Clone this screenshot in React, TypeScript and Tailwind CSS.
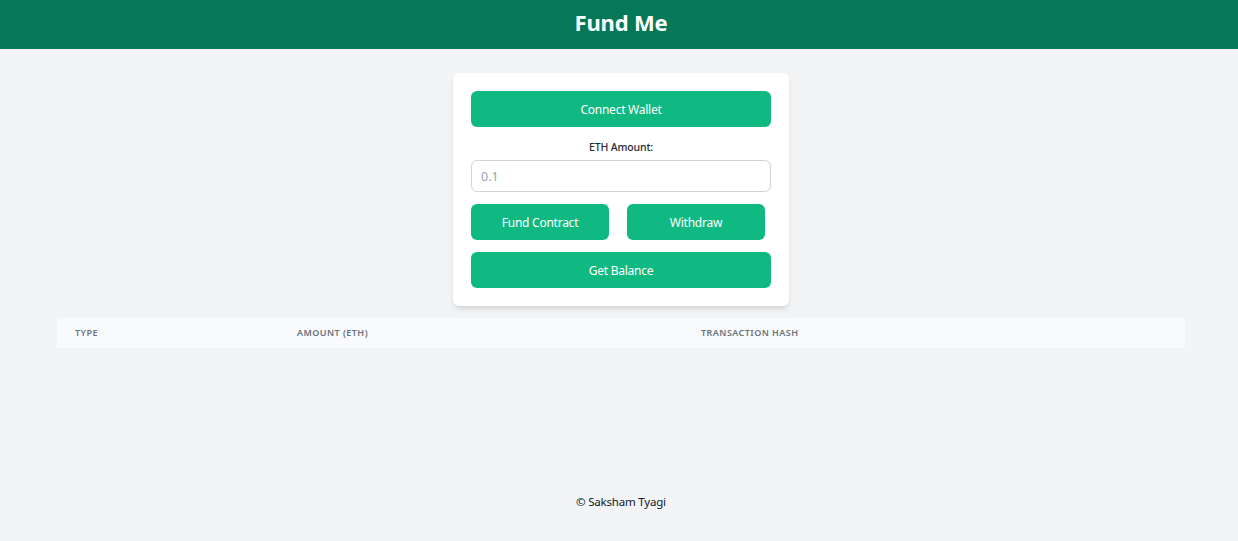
export default function App() {
  const btn = "h-9 pt-[2px] rounded-md bg-[#10b981] text-white text-[12px] tracking-[-0.25px]";
  return (
    <div
      className="min-h-[541px] bg-[#f3f4f6] flex flex-col"
      style={{ fontFamily: '"Noto Sans", "Open Sans", sans-serif' }}
    >
      <header className="h-[49px] bg-[#047857] flex items-center justify-center pb-[5px]">
        <h1 className="text-white text-[22px] font-bold leading-none ml-1 tracking-[-0.2px]">Fund Me</h1>
      </header>
      <main className="flex flex-col items-center pt-6">
        <div className="ml-1 w-[336px] bg-white rounded-md shadow-md p-[18px] flex flex-col">
          <button className={btn + " w-full"}>Connect Wallet</button>
          <label className="mt-3 text-center text-[10.5px] tracking-[-0.15px] font-medium text-[#1f2937] leading-4">
            ETH Amount:
          </label>
          <input
            placeholder="0.1"
            className="mt-[5px] h-8 w-full rounded-md border border-[#d1d5db] px-[9px] text-[12.5px] placeholder:text-[#9ca3af] outline-none"
          />
          <div className="mt-3 flex gap-[18px]">
            <button className={btn + " w-[138px]"}>Fund Contract</button>
            <button className={btn + " w-[138px]"}>Withdraw</button>
          </div>
          <button className={btn + " mt-3 w-full"}>Get Balance</button>
        </div>
        <div className="mt-3 self-start ml-[57px] w-[1128px] h-[30px] bg-[#f9fafb] grid grid-cols-[222px_404px_502px] items-center text-[9px] font-semibold uppercase tracking-wider text-[#6b7280]">
          <div className="px-[18px]">Type</div>
          <div className="px-[18px]">Amount (ETH)</div>
          <div className="px-[18px]">Transaction Hash</div>
        </div>
      </main>
      <footer className="mt-[145px] ml-1 text-center text-[11.5px] tracking-[-0.2px] text-[#111827]">© Saksham Tyagi</footer>
    </div>
  );
}
